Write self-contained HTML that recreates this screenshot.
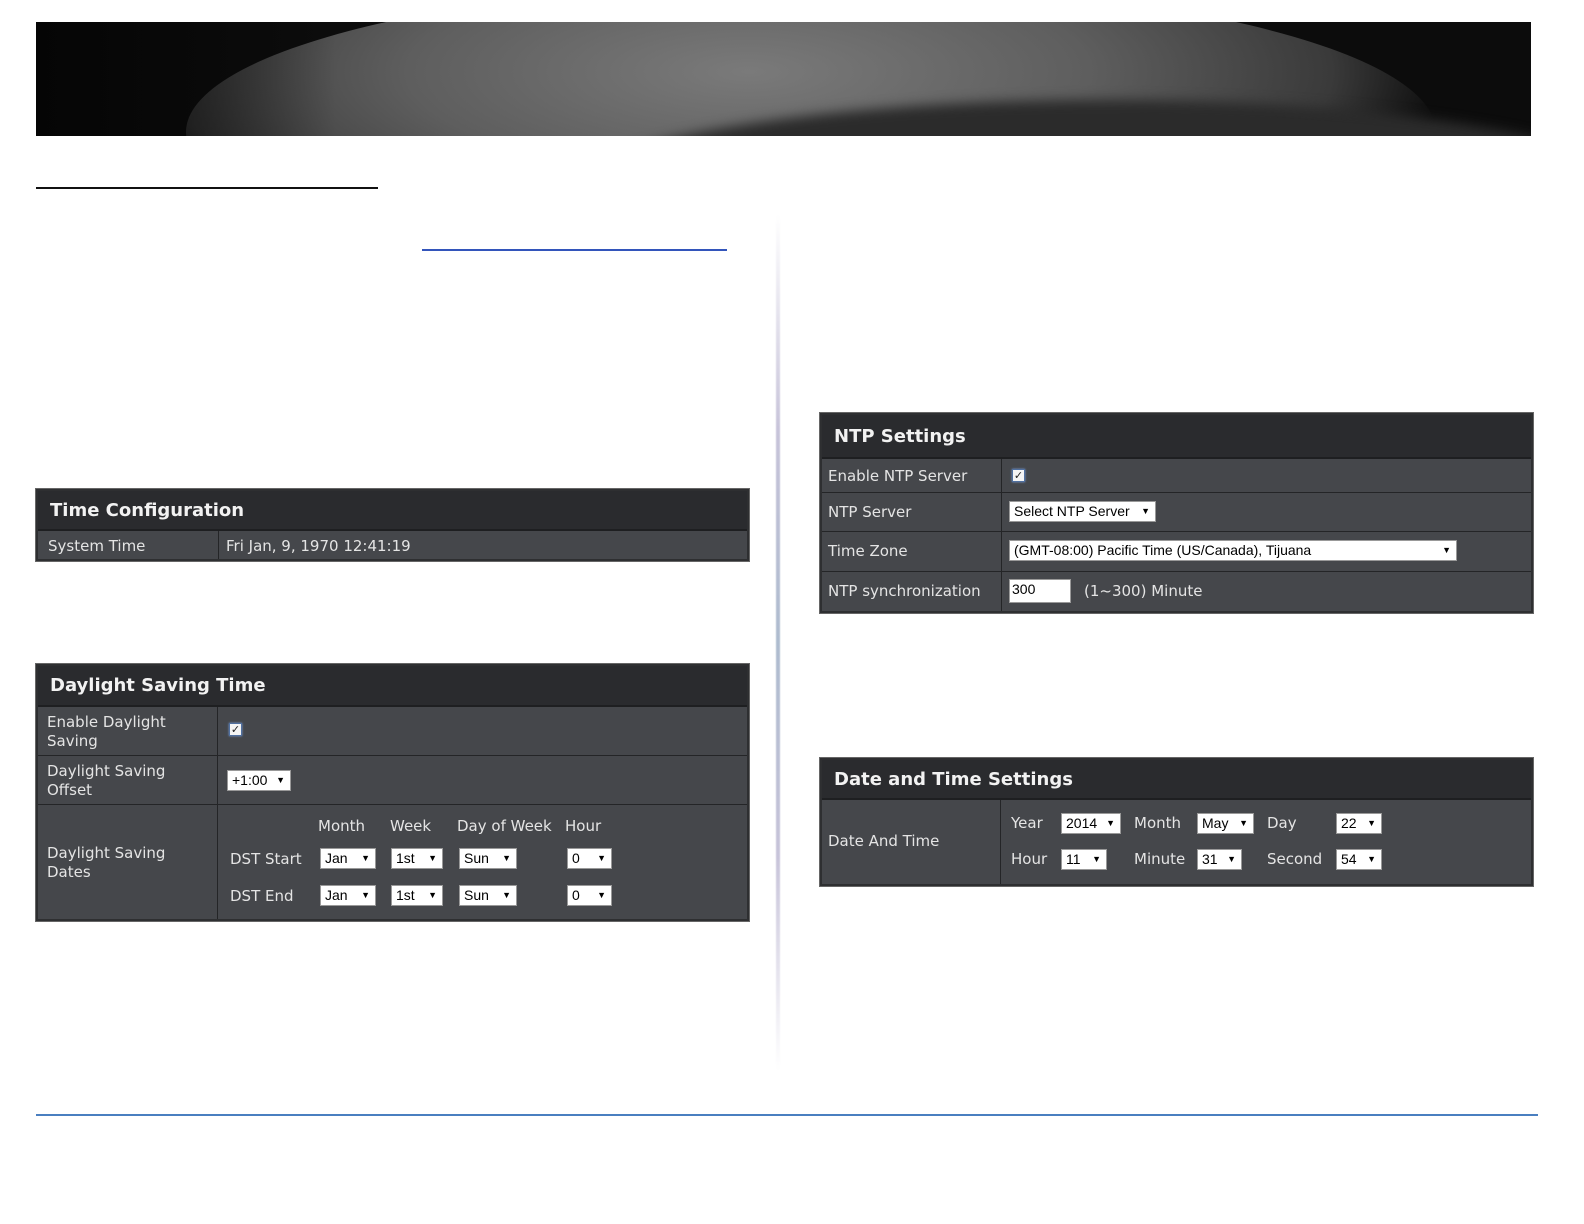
<!DOCTYPE html>
<html><head><meta charset="utf-8">
<style>
*{margin:0;padding:0;box-sizing:border-box}
body{width:1584px;height:1224px;background:#fff;position:relative;overflow:hidden;font-family:"DejaVu Sans","Liberation Sans",sans-serif}
.a{position:absolute}
.banner{left:36px;top:22px;width:1495px;height:114px;background:#0c0c0c;overflow:hidden}
.panel{position:absolute;background:#45474b;border:2px solid #2e2f31;box-shadow:0 0 0 1px #666}
.hd{position:absolute;left:0;right:0;top:0;background:#2a2b2e;color:#f2f2f2;font-weight:bold;font-size:18px;border-bottom:2px solid #1e1f21;padding-left:12px}
.vl{position:absolute;width:1px;background:#242527}
.hl{position:absolute;height:1px;background:#242527}
.t{position:absolute;color:#e4e4e4;font-size:15px;line-height:19px;white-space:nowrap}
.s{position:absolute;background:#fff;border:1px solid #999;color:#000;font-family:"Liberation Sans",sans-serif;font-size:14px;line-height:18px;height:21px;padding-left:4px;white-space:nowrap}
.s:after{content:"▼";position:absolute;right:5px;top:0;font-size:9px}
.cb{position:absolute;width:13px;height:13px;background:#f4f4f4;border:1px solid #5070a0;box-shadow:0 0 2px #7aa0e0;font-size:11px;line-height:11px;text-align:center;color:#222;font-weight:bold}
</style></head><body>
<div class="a banner">
 <div class="a" style="left:150px;top:-40px;width:1250px;height:300px;border-radius:50%;background:radial-gradient(ellipse at 45% 30%,#7a7a7a 0%,#5e5e5e 35%,#3a3a3a 60%,rgba(20,20,20,0) 72%)"></div>
 <div class="a" style="left:520px;top:78px;width:1100px;height:200px;border-radius:50%;background:#2b2b2b;filter:blur(6px)"></div>
 <div class="a" style="left:0;top:0;width:300px;height:114px;background:linear-gradient(90deg,#050505,rgba(5,5,5,0))"></div>
</div>
<div class="a" style="left:36px;top:187px;width:342px;height:2px;background:#111"></div>
<div class="a" style="left:422px;top:249px;width:305px;height:2px;background:#3355bb"></div>
<div class="a" style="left:776px;top:215px;width:4px;height:855px;background:linear-gradient(180deg,#fff,#c8c4da 25%,#aebccf 50%,#c8c4da 75%,#fff);filter:blur(0.6px)"></div>
<div class="a" style="left:36px;top:1114px;width:1502px;height:2px;background:#4a7fc0"></div>

<!-- Time Configuration -->
<div class="panel" style="left:36px;top:489px;width:713px;height:72px">
 <div class="hd" style="height:40px;line-height:40px">Time Configuration</div>
 <div class="vl" style="left:180px;top:40px;bottom:0"></div>
 <div class="t" style="left:10px;top:46px">System Time</div>
 <div class="t" style="left:188px;top:46px">Fri Jan, 9, 1970 12:41:19</div>
</div>

<!-- DST -->
<div class="panel" style="left:36px;top:664px;width:713px;height:257px">
 <div class="hd" style="height:41px;line-height:40px">Daylight Saving Time</div>
 <div class="vl" style="left:179px;top:41px;bottom:0"></div>
 <div class="hl" style="left:0;right:0;top:89px"></div>
 <div class="hl" style="left:0;right:0;top:138px"></div>
 <div class="t" style="left:9px;top:47px">Enable Daylight<br>Saving</div>
 <div class="cb" style="left:191px;top:57px">✓</div>
 <div class="t" style="left:9px;top:96px">Daylight Saving<br>Offset</div>
 <div class="s" style="left:189px;top:104px;width:64px">+1:00</div>
 <div class="t" style="left:280px;top:151px">Month</div>
 <div class="t" style="left:352px;top:151px">Week</div>
 <div class="t" style="left:419px;top:151px">Day of Week</div>
 <div class="t" style="left:527px;top:151px">Hour</div>
 <div class="t" style="left:9px;top:178px">Daylight Saving<br>Dates</div>
 <div class="t" style="left:192px;top:184px">DST Start</div>
 <div class="s" style="left:282px;top:182px;width:56px">Jan</div>
 <div class="s" style="left:353px;top:182px;width:52px">1st</div>
 <div class="s" style="left:421px;top:182px;width:58px">Sun</div>
 <div class="s" style="left:529px;top:182px;width:45px">0</div>
 <div class="t" style="left:192px;top:221px">DST End</div>
 <div class="s" style="left:282px;top:219px;width:56px">Jan</div>
 <div class="s" style="left:353px;top:219px;width:52px">1st</div>
 <div class="s" style="left:421px;top:219px;width:58px">Sun</div>
 <div class="s" style="left:529px;top:219px;width:45px">0</div>
</div>

<!-- NTP -->
<div class="panel" style="left:820px;top:413px;width:713px;height:200px">
 <div class="hd" style="height:44px;line-height:44px">NTP Settings</div>
 <div class="vl" style="left:179px;top:44px;bottom:0"></div>
 <div class="hl" style="left:0;right:0;top:77px"></div>
 <div class="hl" style="left:0;right:0;top:116px"></div>
 <div class="hl" style="left:0;right:0;top:156px"></div>
 <div class="t" style="left:6px;top:52px">Enable NTP Server</div>
 <div class="cb" style="left:190px;top:54px">✓</div>
 <div class="t" style="left:6px;top:88px">NTP Server</div>
 <div class="s" style="left:187px;top:86px;width:147px">Select NTP Server</div>
 <div class="t" style="left:6px;top:127px">Time Zone</div>
 <div class="s" style="left:187px;top:125px;width:448px">(GMT-08:00) Pacific Time (US/Canada), Tijuana</div>
 <div class="t" style="left:6px;top:167px">NTP synchronization</div>
 <div class="s" style="left:187px;top:164px;width:62px;height:24px;padding-left:2px">300</div>
 <style>.nd:after{content:none}</style>
 <div class="t" style="left:262px;top:167px">(1~300) Minute</div>
</div>

<!-- Date and Time -->
<div class="panel" style="left:820px;top:758px;width:713px;height:128px">
 <div class="hd" style="height:40px;line-height:40px">Date and Time Settings</div>
 <div class="vl" style="left:178px;top:40px;bottom:0"></div>
 <div class="t" style="left:6px;top:72px">Date And Time</div>
 <div class="t" style="left:189px;top:54px">Year</div>
 <div class="s" style="left:239px;top:53px;width:60px">2014</div>
 <div class="t" style="left:312px;top:54px">Month</div>
 <div class="s" style="left:375px;top:53px;width:57px">May</div>
 <div class="t" style="left:445px;top:54px">Day</div>
 <div class="s" style="left:514px;top:53px;width:46px">22</div>
 <div class="t" style="left:189px;top:90px">Hour</div>
 <div class="s" style="left:239px;top:89px;width:46px">11</div>
 <div class="t" style="left:312px;top:90px">Minute</div>
 <div class="s" style="left:375px;top:89px;width:45px">31</div>
 <div class="t" style="left:445px;top:90px">Second</div>
 <div class="s" style="left:514px;top:89px;width:46px">54</div>
</div>
<style>.panel .s[style*="width:62px"]:after{content:none}</style>
</body></html>
